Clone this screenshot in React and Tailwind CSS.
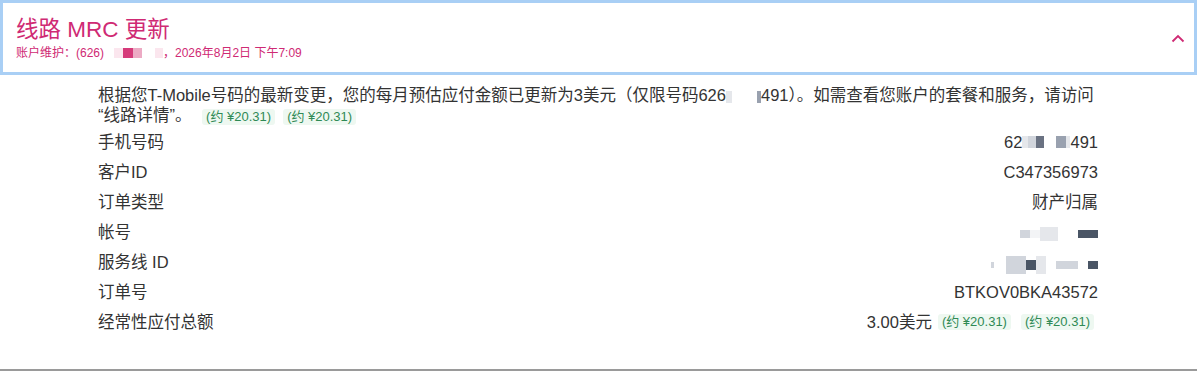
import React from 'react';

const font = { fontFamily: '"Liberation Sans", "Noto Sans CJK SC", sans-serif' };

const Pill = () => (
  <span className="inline-block rounded-[3px] bg-[#eef8f1] px-[4px] text-[13px] leading-[16px] text-[#2f8a55] ml-[6px]">
    (约 ¥20.31)
  </span>
);

const Blur = ({ w = 10, c = 'bg-gray-300', h = 'h-[12px]' }) => (
  <span className={`inline-block align-middle ${h} ${c}`} style={{ width: w }} />
);

const rows = [
  { label: '手机号码', value: (
    <span className="inline-flex items-center">
      62<Blur w={6} c="bg-gray-200" /><Blur w={8} c="bg-gray-300" /><Blur w={8} c="bg-gray-500" />
      <span className="w-[12px]" /><Blur w={10} c="bg-gray-400" /><Blur w={4} c="bg-gray-200" />491
    </span>
  ) },
  { label: '客户ID', value: 'C347356973' },
  { label: '订单类型', value: '财产归属' },
  { label: '帐号', value: (
    <span className="inline-flex items-center">
      <Blur w={10} c="bg-gray-300" h="h-[8px]" /><Blur w={10} c="bg-gray-100" h="h-[8px]" /><Blur w={18} c="bg-gray-200" h="h-[14px]" />
      <span className="w-[20px]" /><Blur w={20} c="bg-gray-600" h="h-[8px]" />
    </span>
  ) },
  { label: '服务线 ID', value: (
    <span className="inline-flex items-center">
      <Blur w={3} c="bg-gray-300" h="h-[6px]" /><span className="w-[12px]" />
      <Blur w={10} c="bg-gray-300" h="h-[18px]" /><Blur w={10} c="bg-gray-300" h="h-[18px]" /><Blur w={10} c="bg-gray-600" h="h-[10px]" /><Blur w={10} c="bg-gray-200" h="h-[18px]" />
      <span className="w-[10px]" /><Blur w={22} c="bg-gray-300" h="h-[8px]" /><span className="w-[10px]" /><Blur w={10} c="bg-gray-600" h="h-[8px]" />
    </span>
  ) },
  { label: '订单号', value: 'BTKOV0BKA43572' },
  { label: '经常性应付总额', value: (
    <span className="inline-flex items-center">3.00美元<Pill /><span className="w-[4px]" /><Pill /></span>
  ) },
];

export default function App() {
  return (
    <div className="w-[1200px] h-[372px] bg-white flex flex-col" style={font}>
      <div className="w-[1197px] h-[75px] border-[3px] border-[#a9cff5] flex items-center justify-between pl-[13px] pr-[9px]">
        <div>
          <div className="text-[22.5px] leading-[28px] text-[#cf2a74] mt-[1px]">线路 MRC 更新</div>
          <div className="text-[12px] leading-[14px] text-[#cf2a74] mt-[2px] flex items-center">
            账户维护：(626)
            <span className="inline-flex items-center ml-[10px]">
              <Blur w={9} c="bg-[#fbe6ee]" h="h-[10px]" /><Blur w={10} c="bg-[#d63a7a]" h="h-[10px]" /><Blur w={9} c="bg-[#ecaac4]" h="h-[10px]" />
              <span className="w-[13px]" /><Blur w={8} c="bg-[#fbe6ee]" h="h-[10px]" />
            </span>
            ，2026年8月2日 下午7:09
          </div>
        </div>
        <svg width="14" height="9" viewBox="0 0 14 9" className="mt-[2px]">
          <path d="M1.5 7.5 L7 2 L12.5 7.5" fill="none" stroke="#cf2a74" strokeWidth="1.8" />
        </svg>
      </div>

      <div className="pl-[98px] w-[1120px] mt-[10px] text-[16.5px] text-[#333] leading-[20px]">
        根据您T-Mobile号码的最新变更，您的每月预估应付金额已更新为3美元（仅限号码626
        <Blur w={6} c="bg-gray-200" /><span className="inline-block w-[25px]" /><Blur w={4} c="bg-gray-400" />
        491）。如需查看您账户的套餐和服务，请访问<br />“线路详情”。 <Pill /><span className="ml-[2px]" /><Pill />
      </div>

      <div className="pl-[98px] w-[1098px] mt-[2px] flex flex-col text-[16.5px] text-[#333]">
        {rows.map((r) => (
          <div key={r.label} className="flex justify-between items-center h-[30px]">
            <span>{r.label}</span>
            <span className={r.label === '经常性应付总额' ? 'mr-[4px]' : ''}>{r.value}</span>
          </div>
        ))}
      </div>

      <div className="flex-1" />
      <div className="w-[1197px] h-[2px] bg-[#9a9a9a] mb-[1px]" />
    </div>
  );
}
